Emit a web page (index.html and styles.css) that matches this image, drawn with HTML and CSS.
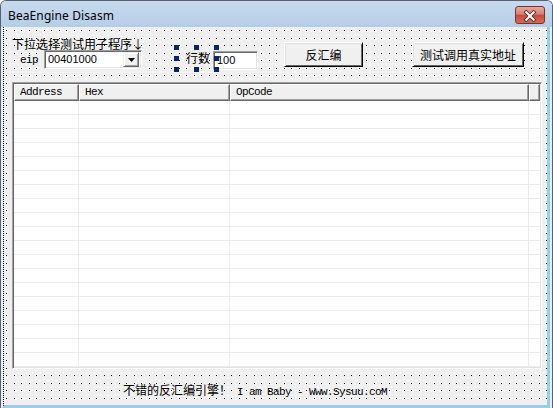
FILE: index.html
```html
<!DOCTYPE html>
<html>
<head>
<meta charset="utf-8">
<title>BeaEngine Disasm</title>
<link rel="stylesheet" href="styles.css">
</head>
<body>
<div class="window">
  <div class="titlebar">
    <span class="title">BeaEngine Disasm</span>
    <div class="close">
      <svg width="30" height="18" viewBox="0 0 30 18">
        <path d="M11 5 L19 13 M19 5 L11 13" stroke="#5a2020" stroke-width="4" stroke-linecap="square"/>
        <path d="M11 5 L19 13 M19 5 L11 13" stroke="#ffffff" stroke-width="2.2" stroke-linecap="square"/>
      </svg>
    </div>
  </div>
  <div class="client">
    <div class="controls">
      <div class="pick">
        <div class="cap">下拉选择测试用子程序↓</div>
        <div class="eiprow">
          <span class="eip">eip</span>
          <div class="combo">
            <span class="val">00401000</span>
            <span class="drop">
              <svg width="7" height="4" viewBox="0 0 7 4"><path d="M0 0 H7 L3.5 4 Z" fill="#000"/></svg>
            </span>
          </div>
        </div>
      </div>
      <div class="static">
        <span class="stext">行数</span>
        <i class="hd h1"></i><i class="hd h2"></i><i class="hd h3"></i>
        <i class="hd h4"></i><i class="hd h5"></i>
        <i class="hd h6"></i><i class="hd h7"></i><i class="hd h8"></i>
      </div>
      <div class="edit">100</div>
      <div class="btn b1">反汇编</div>
      <div class="btn b2">测试调用真实地址</div>
    </div>
    <div class="list">
      <div class="header">
        <div class="hc c1">Address</div>
        <div class="hc c2">Hex</div>
        <div class="hc c3">OpCode</div>
        <div class="hc c4"></div>
      </div>
      <div class="body">
        <div class="col c1"></div>
        <div class="col c2"></div>
        <div class="col c3"></div>
        <div class="col c4"></div>
      </div>
    </div>
    <div class="footer">不错的反汇编引擎！<span class="mono"> I am Baby - Www.Sysuu.coM</span></div>
  </div>
</div>
</body>
</html>
```

FILE: styles.css
```css
* { box-sizing: border-box; margin: 0; padding: 0; }
html, body { width: 553px; height: 408px; overflow: hidden; background: #ffffff; }
body { font-family: "Noto Sans CJK SC", sans-serif; color: #000; }

.window {
  width: 553px;
  height: 408px;
  display: flex;
  flex-direction: column;
  border: 1px solid #58626f;
  border-bottom: none;
  border-radius: 6px 6px 0 0;
  background: #e6edf5;
  padding: 0 2px 0 2px;
}

.titlebar {
  height: 26px;
  flex: none;
  display: flex;
  align-items: flex-start;
  justify-content: space-between;
  margin: 0 -2px;
  padding: 0 7px 0 7px;
  background: linear-gradient(#c7daef, #b6cde8);
  border-radius: 5px 5px 0 0;
}
.title {
  font-family: "Noto Sans", sans-serif;
  font-size: 12px;
  line-height: 14px;
  margin-top: 8px;
  color: #000;
  letter-spacing: 0.1px;
}
.close {
  width: 30px;
  height: 18px;
  margin-top: 5px;
  border: 1px solid #6b3a34;
  border-radius: 3px;
  background: linear-gradient(#e6a999 0%, #d8806f 45%, #c9483a 50%, #d66b55 100%);
  display: flex;
}

.client {
  flex: 1;
  display: flex;
  flex-direction: column;
  padding: 0 0 0 8px;
  background-color: #f0f0f0;
  background-image:
    conic-gradient(at 1px 1px, transparent 75%, #000 0),
    conic-gradient(at 1px 1px, transparent 75%, #000 0),
    conic-gradient(at 1px 1px, transparent 75%, #000 0),
    conic-gradient(at 1px 1px, transparent 75%, #000 0);
  background-size: 15px 15px;
  background-position: 2px 3px, 10px 3px, 2px 11px, 10px 11px;
  border-left: 1px dotted #000;
  border-right: 3px solid #8ed3ea;
  border-bottom: 3px solid #8ed3ea;
  margin-left: 0;
}

.controls {
  display: flex;
  align-items: flex-start;
  height: 55px;
  flex: none;
}
.pick { margin-top: 10px; width: 131px; display: flex; flex-direction: column; }
.cap { font-size: 12px; line-height: 13px; height: 13px; white-space: nowrap; }
.eiprow { display: flex; align-items: flex-start; }
.eip {
  font-family: "Liberation Mono", monospace;
  font-size: 11px;
  letter-spacing: -0.6px;
  line-height: 12px;
  margin: 4px 0 0 8px;
  width: 24px;
}
.combo {
  width: 98px;
  height: 19px;
  background: #fff;
  border-top: 1px solid #a0a0a0;
  border-left: 1px solid #a0a0a0;
  border-right: 1px solid #fff;
  border-bottom: 1px solid #fff;
  box-shadow: inset 1px 1px 0 #696969, inset -1px -1px 0 #e3e3e3;
  display: flex;
  align-items: center;
  justify-content: space-between;
  padding: 0 2px 0 3px;
  flex: none;
}
.val { font-family: "Liberation Sans", sans-serif; font-size: 11px; line-height: 13px; }
.drop {
  width: 16px;
  height: 15px;
  background: #f0f0f0;
  border-top: 1px solid #f0f0f0;
  border-left: 1px solid #f0f0f0;
  border-right: 1px solid #696969;
  border-bottom: 1px solid #696969;
  box-shadow: inset 1px 1px 0 #fff, inset -1px -1px 0 #a0a0a0;
  display: flex;
  align-items: center;
  justify-content: center;
}

.static {
  position: relative;
  width: 40px;
  height: 22px;
  margin: 20px 0 0 33px;
  display: flex;
  align-items: center;
  justify-content: center;
  flex: none;
}
.stext { font-size: 12px; line-height: 14px; margin-left: 4px; }
.hd { position: absolute; width: 5px; height: 5px; background: #0a246a; }
.h1 { left: -2px; top: -2px; }
.h2 { left: 18px; top: -2px; }
.h3 { right: -3px; top: -2px; }
.h4 { left: -2px; top: 9px; }
.h5 { right: -3px; top: 9px; }
.h6 { left: -2px; bottom: -3px; }
.h7 { left: 18px; bottom: -3px; }
.h8 { right: -3px; bottom: -3px; }

.edit {
  width: 45px;
  height: 19px;
  margin: 24px 0 0 -3px;
  background: #fff;
  border-top: 1px solid #a0a0a0;
  border-left: 1px solid #a0a0a0;
  border-right: 1px solid #fff;
  border-bottom: 1px solid #fff;
  box-shadow: inset 1px 1px 0 #696969, inset -1px -1px 0 #e3e3e3;
  font-family: "Liberation Sans", sans-serif;
  font-size: 11px;
  line-height: 17px;
  padding-left: 3px;
  flex: none;
}

.btn {
  height: 25px;
  margin-top: 15px;
  background: #f0f0f0;
  border-top: 1px solid #fff;
  border-left: 1px solid #fff;
  border-right: 1px solid #000;
  border-bottom: 1px solid #000;
  box-shadow: inset 1px 1px 0 #e3e3e3, inset -1px -1px 0 #696969;
  font-size: 12px;
  line-height: 23px;
  text-align: center;
  flex: none;
}
.b1 { width: 79px; margin-left: 26px; }
.b2 { width: 112px; margin-left: 49px; }

.list {
  width: 530px;
  height: 287px;
  flex: none;
  display: flex;
  flex-direction: column;
  border-top: 1px solid #a0a0a0;
  border-left: 1px solid #a0a0a0;
  border-right: 1px solid #fff;
  border-bottom: 1px solid #fff;
  box-shadow: inset 1px 1px 0 #696969, inset -1px -1px 0 #e3e3e3;
  padding: 1px 1px 1px 1px;
  background: #fff;
}
.header { display: flex; height: 17px; flex: none; }
.hc {
  height: 17px;
  background: #f0f0f0;
  border-top: 1px solid #fff;
  border-left: 1px solid #fff;
  border-right: 1px solid #696969;
  border-bottom: 1px solid #696969;
  box-shadow: inset -1px -1px 0 #a0a0a0;
  font-family: "Liberation Mono", monospace;
  font-size: 11px;
  letter-spacing: -0.6px;
  line-height: 15px;
  padding-left: 5px;
  white-space: nowrap;
}
.c1 { width: 65px; }
.c2 { width: 151px; }
.c3 { width: 299px; }
.c4 { flex: 1; }
.body {
  flex: 1;
  display: flex;
  background-image: repeating-linear-gradient(to bottom, transparent 0, transparent 13px, #ececec 13px, #ececec 14px);
}
.col { border-right: 1px solid #ececec; }
.body .c4 { border-right: none; }

.footer {
  margin: 14px 0 0 111px;
  font-size: 12px;
  line-height: 14px;
  white-space: nowrap;
}
.mono {
  font-family: "Liberation Mono", monospace;
  font-size: 11px;
  letter-spacing: -0.6px;
}
```
